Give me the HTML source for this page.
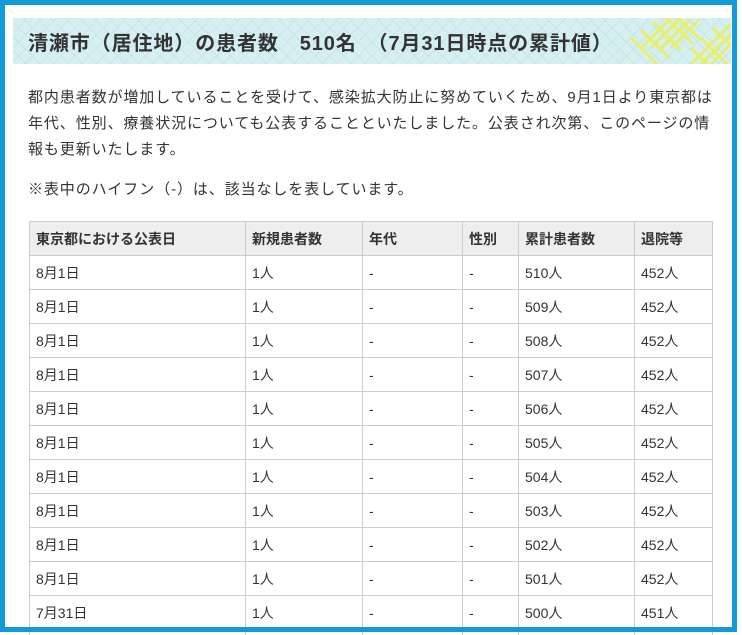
<!DOCTYPE html>
<html><head><meta charset="utf-8"><style>
*{margin:0;padding:0;box-sizing:border-box}
html,body{width:742px;height:635px;overflow:hidden}
body{background:#fff;font-family:"Liberation Sans","Noto Sans CJK JP",sans-serif;color:#333;position:relative}
.frame{position:absolute;left:0;top:0;width:737px;height:632px;border:5px solid #129ad9;pointer-events:none;z-index:5}
.h{position:absolute;left:13px;top:18px;width:718px;height:46px;background-color:#d6f0f2;
background-image:repeating-linear-gradient(45deg,transparent 0 9px,#c5e6ea 9px 10px),repeating-linear-gradient(-45deg,transparent 0 9px,#c5e6ea 9px 10px);overflow:hidden}
.h span{position:absolute;left:15px;top:9px;font-size:20px;font-weight:bold;color:#333;white-space:pre;letter-spacing:0.9px}
.p{position:absolute;left:28px;font-size:15px;line-height:26px;width:710px;white-space:nowrap}
table{position:absolute;left:29px;top:221px;border-collapse:collapse;font-size:14px;width:684px}
td,th{border:1px solid #ccc;height:34px;padding:0 6px;text-align:left;font-weight:normal}
th{background:#eee;font-weight:bold}
</style></head><body>
<div class="frame"></div>
<div class="h">
<svg style="position:absolute;right:0;top:0" width="110" height="46">
<g stroke="#e8ef6a" stroke-width="3" fill="none">
<path d="M20 30 L48 2 M30 30 L58 2 M40 30 L68 2 M50 30 L78 2 M10 20 L38 48 M20 12 L48 40 M32 4 L60 32 M44 -2 L72 26 M55 -2 L80 22"/>
<path d="M70 46 L110 6 M80 46 L110 16 M90 46 L110 26 M70 30 L90 50 M80 20 L110 50 M92 10 L110 28"/>
</g></svg>
<span>清瀬市（居住地）の患者数　510名　（7月31日時点の累計値）</span></div>
<div class="p" style="top:85px;letter-spacing:0.9px">都内患者数が増加していることを受けて、感染拡大防止に努めていくため、9月1日より東京都は<br>年代、性別、療養状況についても公表することといたしました。公表され次第、このページの情<br>報も更新いたします。</div>
<div class="p" style="top:177px;letter-spacing:0.9px">※表中のハイフン（-）は、該当なしを表しています。</div>
<table>
<tr><th style="width:216px">東京都における公表日</th><th style="width:117px">新規患者数</th><th style="width:100px">年代</th><th style="width:56px">性別</th><th style="width:116px">累計患者数</th><th>退院等</th></tr>
<tr><td>8月1日</td><td>1人</td><td>-</td><td>-</td><td>510人</td><td>452人</td></tr>
<tr><td>8月1日</td><td>1人</td><td>-</td><td>-</td><td>509人</td><td>452人</td></tr>
<tr><td>8月1日</td><td>1人</td><td>-</td><td>-</td><td>508人</td><td>452人</td></tr>
<tr><td>8月1日</td><td>1人</td><td>-</td><td>-</td><td>507人</td><td>452人</td></tr>
<tr><td>8月1日</td><td>1人</td><td>-</td><td>-</td><td>506人</td><td>452人</td></tr>
<tr><td>8月1日</td><td>1人</td><td>-</td><td>-</td><td>505人</td><td>452人</td></tr>
<tr><td>8月1日</td><td>1人</td><td>-</td><td>-</td><td>504人</td><td>452人</td></tr>
<tr><td>8月1日</td><td>1人</td><td>-</td><td>-</td><td>503人</td><td>452人</td></tr>
<tr><td>8月1日</td><td>1人</td><td>-</td><td>-</td><td>502人</td><td>452人</td></tr>
<tr><td>8月1日</td><td>1人</td><td>-</td><td>-</td><td>501人</td><td>452人</td></tr>
<tr><td>7月31日</td><td>1人</td><td>-</td><td>-</td><td>500人</td><td>451人</td></tr>
<tr><td>7月31日</td><td>1人</td><td>-</td><td>-</td><td>499人</td><td>451人</td></tr>
</table>
</body></html>
